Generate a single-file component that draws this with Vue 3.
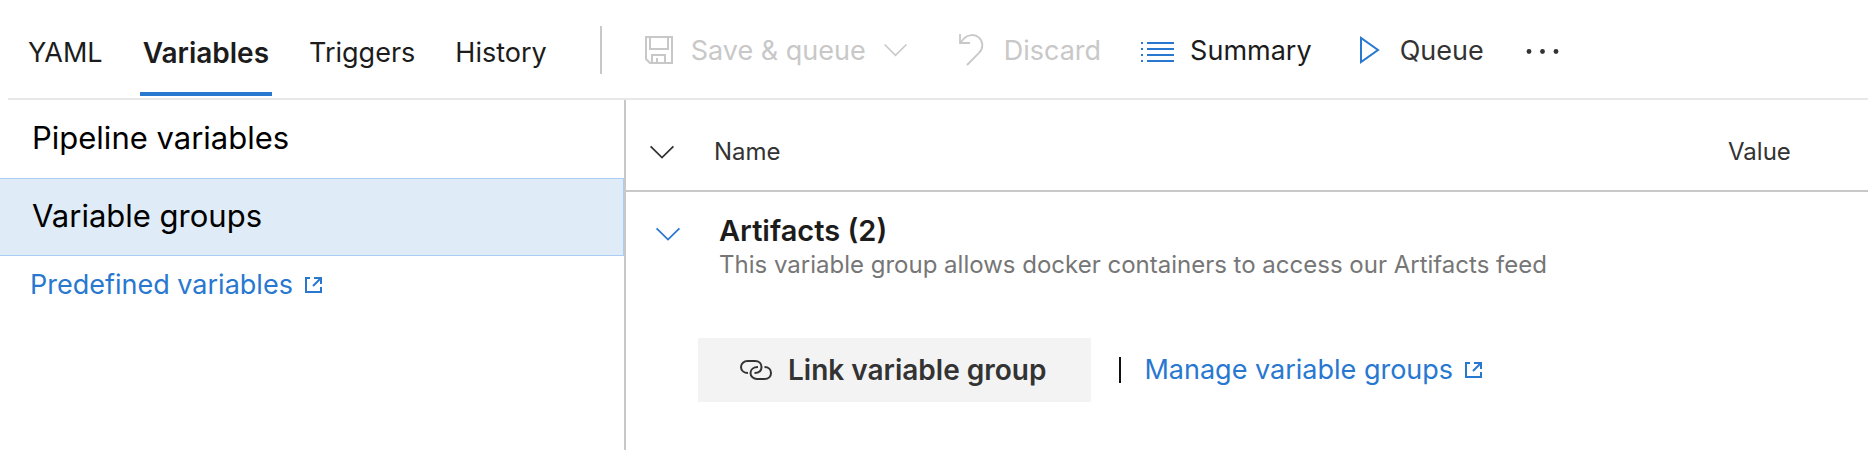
<script setup>
import { ref } from 'vue'

const tabs = ['YAML', 'Variables', 'Triggers', 'History']
const activeTab = ref('Variables')
const sections = ['Pipeline variables', 'Variable groups']
const activeSection = ref('Variable groups')
const group = {
  name: 'Artifacts',
  count: 2,
  description: 'This variable group allows docker containers to access our Artifacts feed',
}
</script>

<template>
  <div class="page">
    <header class="topbar">
      <nav class="tabs" aria-label="Pipeline sections">
        <a
          v-for="tab in tabs"
          :key="tab"
          href="#"
          class="tab"
          :class="{ active: tab === activeTab }"
          @click.prevent="activeTab = tab"
        >{{ tab }}</a>
      </nav>
      <span class="divider"></span>
      <div class="toolbar">
        <button class="command" type="button" disabled>
          <svg width="30" height="32" viewBox="0 0 30 32" fill="none" stroke="currentColor" stroke-width="2">
            <path d="M1 3H27V29H5L1 25Z" />
            <path d="M5 3V15H23V3" />
            <path d="M7 29V21H20V29M12 24V29" />
          </svg>
          <span>Save &amp; queue</span>
          <svg width="26" height="32" viewBox="0 0 26 32" fill="none" stroke="currentColor" stroke-width="1.6">
            <path d="M2.600 10.500L13.500 21.400L24.400 10.500" />
          </svg>
        </button>
        <button class="command" type="button" disabled>
          <svg width="40" height="32" viewBox="0 0 40 32" fill="none" stroke="currentColor" stroke-width="1.8">
            <path d="M12 0V9H22M12 9L16.5 4C20 0.4 27 -0.2 31 3.6C35.5 7.8 35.4 14.4 31 18.8L19 31" />
          </svg>
          <span>Discard</span>
        </button>
        <button class="command" type="button">
          <svg class="blue" width="33" height="32" viewBox="0 0 33 32" fill="currentColor">
            <path d="M0 8h2v2H0zM0 14h2v2H0zM0 20h2v2H0zM0 26h2v2H0zM6 8h27v2H6zM6 14h27v2H6zM6 20h27v2H6zM6 26h27v2H6z" />
          </svg>
          <span>Summary</span>
        </button>
        <button class="command soft" type="button">
          <svg class="blue" width="32" height="32" viewBox="0 0 32 32" fill="none" stroke="currentColor" stroke-width="2">
            <path d="M9 4V28L26 16Z" />
          </svg>
          <span>Queue</span>
        </button>
        <button class="command soft" type="button" aria-label="More actions">
          <svg width="38" height="32" viewBox="0 0 38 32" fill="currentColor">
            <circle cx="5" cy="17.500" r="2.400" />
            <circle cx="18.500" cy="17.500" r="2.400" />
            <circle cx="32" cy="17.500" r="2.400" />
          </svg>
        </button>
      </div>
    </header>

    <div class="body">
      <aside class="sidebar">
        <button
          v-for="section in sections"
          :key="section"
          type="button"
          class="section"
          :class="{ selected: section === activeSection }"
          @click="activeSection = section"
        >{{ section }}</button>
        <a class="link predefined" href="#">
          Predefined variables
          <svg width="17" height="18" viewBox="0 0 17 18" fill="none" stroke="currentColor" stroke-width="2">
            <path d="M5 2H1V16H16V11M9 2H16V8M15.500 2.500L8 10" />
          </svg>
        </a>
      </aside>

      <main class="content">
        <table class="variables">
          <thead>
            <tr>
              <th class="toggle" scope="col">
                <button type="button" aria-label="Collapse all">
                  <svg width="24" height="14" viewBox="0 0 24 14" fill="none" stroke="currentColor" stroke-width="1.8">
                    <path d="M0.6 1.4L12 12.6L23.4 1.4" />
                  </svg>
                </button>
              </th>
              <th scope="col">Name</th>
              <th class="value" scope="col">Value</th>
            </tr>
          </thead>
          <tbody>
            <tr>
              <td class="toggle">
                <button class="blue" type="button" aria-label="Collapse group">
                  <svg width="24" height="14" viewBox="0 0 24 14" fill="none" stroke="currentColor" stroke-width="1.8">
                    <path d="M0.6 1.4L12 12.6L23.4 1.4" />
                  </svg>
                </button>
              </td>
              <td class="group" colspan="2">
                <div class="group-name">{{ group.name }} ({{ group.count }})</div>
                <div class="group-description">{{ group.description }}</div>
              </td>
            </tr>
          </tbody>
        </table>

        <div class="actions">
          <button class="link-group" type="button">
            <svg width="32" height="22" viewBox="0 0 32 22" fill="none" stroke="currentColor" stroke-width="2">
              <path d="M8 14C4 14 1 11.500 1 8S4 2 7.500 2H15C19 2 21.500 4.500 21.500 8S19 14 14.500 14" />
              <path d="M18 8C13.500 8 10.500 10.500 10.500 14S13.500 20 17 20H24.500C28.500 20 31 17.500 31 14S28.500 8 24.500 8" />
            </svg>
            <span>Link variable group</span>
          </button>
          <span class="bar"></span>
          <a class="link" href="#">
            Manage variable groups
            <svg width="17" height="18" viewBox="0 0 17 18" fill="none" stroke="currentColor" stroke-width="2">
              <path d="M5 2H1V16H16V11M9 2H16V8M15.500 2.500L8 10" />
            </svg>
          </a>
        </div>
      </main>
    </div>
  </div>
</template>

<style>
body {
  background: #fff;
}
</style>

<style scoped>
.page {
  display: flex;
  flex-direction: column;
  min-height: 100vh;
  color: #1c1c1c;
  font: 27px/32px Inter, "Liberation Sans", sans-serif;
}

button {
  padding: 0;
  border: 0;
  background: none;
  color: inherit;
  font: inherit;
  cursor: pointer;
}

svg {
  display: block;
  flex: none;
  overflow: visible;
}

.blue {
  color: #2878d0;
}

.topbar {
  display: flex;
  align-items: flex-start;
  margin-left: 8px;
  padding-left: 17px;
  border-bottom: 2px solid #e8e8e8;
  white-space: nowrap;
}

.tabs {
  display: flex;
  gap: 34px;
}

.tab {
  display: flex;
  align-items: center;
  box-sizing: border-box;
  height: 96px;
  padding: 14px 3px 0;
  border-bottom: 4px solid transparent;
  color: inherit;
  text-decoration: none;
}

.tab.active {
  border-color: #2878d0;
  font-size: 28px;
  font-weight: 600;
}

.toolbar {
  display: flex;
  align-items: center;
  gap: 40px;
  box-sizing: border-box;
  height: 98px;
  padding-top: 4px;
}

.divider {
  width: 2px;
  height: 48px;
  margin: 26px 43px 0 50px;
  background: #c8c8c8;
}

.command {
  display: flex;
  align-items: center;
  gap: 16px;
}

.command svg {
  margin-bottom: 2px;
}

.command:disabled {
  color: #c8c8c8;
  cursor: default;
}

.soft {
  color: #333;
}

.body {
  display: flex;
  flex: 1;
}

.sidebar {
  flex: 0 0 626px;
  box-sizing: border-box;
  border-right: 2px solid #c8c8c8;
}

.section {
  display: block;
  box-sizing: border-box;
  width: 100%;
  height: 78px;
  padding: 0 32px 2px;
  border: 1px solid transparent;
  border-left-width: 0;
  color: #000;
  font-size: 31px;
  text-align: left;
}

.section.selected {
  border-color: #a9cdf5;
  background: #dfebf7;
}

.link {
  display: flex;
  align-items: center;
  gap: 12px;
  color: #2878d0;
  text-decoration: none;
  white-space: nowrap;
}

.predefined {
  margin: 13px 30px;
}

.content {
  flex: 1;
  min-width: 0;
}

.variables {
  width: 100%;
  border-collapse: separate;
  border-spacing: 0;
  table-layout: fixed;
  color: #333;
  font-size: 24px;
  text-align: left;
}

th {
  box-sizing: border-box;
  height: 92px;
  padding: 14px 0 0;
  border-bottom: 2px solid #c8c8c8;
  font-weight: 400;
}

.toggle {
  width: 88px;
}

th.toggle {
  padding-left: 24px;
}

td.toggle {
  padding: 35px 0 0 30px;
  vertical-align: top;
}

.toggle button {
  display: block;
}

.value {
  width: 140px;
}

.group {
  padding: 21px 0 0 5px;
}

.group-name {
  color: #1c1c1c;
  font-size: 29px;
  font-weight: 600;
  line-height: 36px;
}

.group-description {
  color: #767676;
}

.actions {
  display: flex;
  align-items: center;
  margin: 57px 0 47px 72px;
}

.link-group {
  display: flex;
  align-items: center;
  gap: 16px;
  height: 64px;
  padding: 0 45px 0 42px;
  background: #f3f3f3;
  color: #333;
  font-size: 28px;
  font-weight: 600;
  white-space: nowrap;
}

.bar {
  width: 2px;
  height: 26px;
  margin: 0 23px 0 28px;
  background: #111;
}
</style>
